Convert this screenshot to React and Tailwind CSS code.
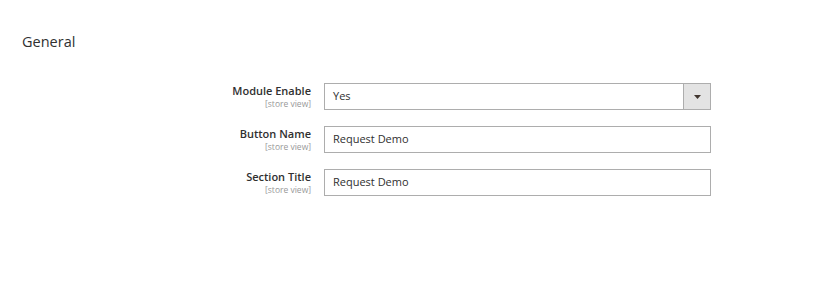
const rows = [
  { label: "Module Enable", value: "Yes", select: true },
  { label: "Button Name", value: "Request Demo" },
  { label: "Section Title", value: "Request Demo" },
];

export default function App() {
  return (
    <div className="w-[830px] h-[288px] bg-white font-['Open_Sans',sans-serif] text-[#303030]">
      <div className="pt-[33px] pl-[22px] text-[14.5px] leading-[18px]">General</div>
      <div className="mt-[32px] flex flex-col gap-[16px]">
        {rows.map((row) => (
          <div key={row.label} className="flex items-start">
            <div className="w-[311px] flex flex-col items-end pt-[1px]">
              <span className="text-[11px] font-semibold leading-[14px]">{row.label}</span>
              <span className="text-[8.5px] leading-[12px] text-[#999]">[store view]</span>
            </div>
            <div className="ml-[13px] w-[387px] h-[27px] border border-[#adadad] bg-white flex items-center text-[11px]">
              <span className="pl-[8px] flex-1">{row.value}</span>
              {row.select && (
                <div className="w-[27px] h-full bg-[#e3e3e3] border-l border-[#adadad] flex items-center justify-center">
                  <svg width="7" height="4" viewBox="0 0 7 4">
                    <path d="M0 0h7L3.5 4z" fill="#41362f" />
                  </svg>
                </div>
              )}
            </div>
          </div>
        ))}
      </div>
    </div>
  );
}
